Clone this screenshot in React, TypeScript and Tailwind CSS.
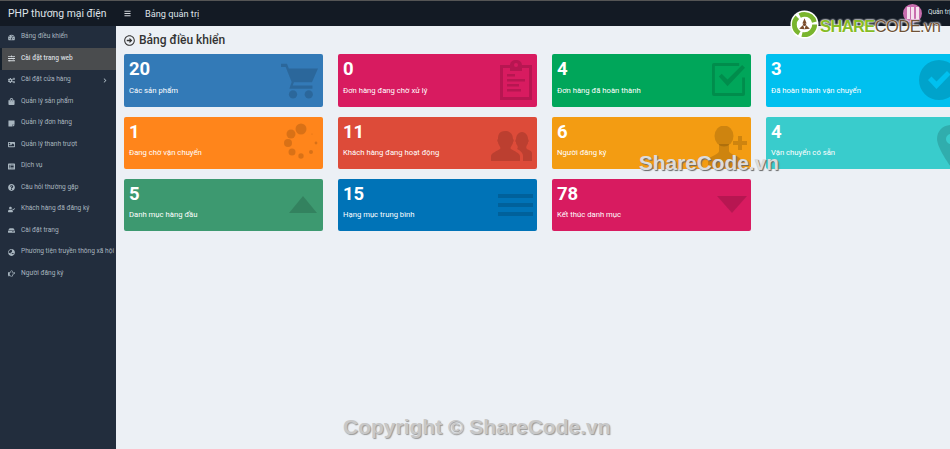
import React from "react";
import {
  FaTachometerAlt, FaSlidersH, FaCogs, FaShoppingBag, FaRegHandPointRight, FaChevronRight, FaBars, FaRegArrowAltCircleRight, FaStickyNote, FaImage, FaListAlt, FaHdd, FaQuestionCircle, FaUserCheck, FaGlobeAsia,
} from "react-icons/fa";

const Cart = () => (
  <svg viewBox="0 0 40 40" className="w-[37px] h-[37px]" fill="currentColor">
    <path d="M0 2h6.5l2 5H40l-6.5 15H14l-1.3 3.5H34V29H9l2.5-7.5L5 5.5H0z" />
    <circle cx="13" cy="35" r="4.5" />
    <circle cx="30" cy="35" r="4.5" />
  </svg>
);
const Clip = () => (
  <svg viewBox="0 0 32 40" className="w-[32px] h-[40px]" fill="currentColor" fillRule="evenodd">
    <path d="M0 5h10c0-3 2.5-5 6-5s6 2 6 5h10v35H0zM3 8v29h26V8h-7v3H10V8zM14 5a2 2 0 1 0 4 0 2 2 0 0 0-4 0z" />
    <path d="M7 14h8v2.5H7zM7 19h18v2.5H7zM7 24h12v2.5H7zM7 29h14v2.5H7z" />
  </svg>
);
const CheckSquare = () => (
  <svg viewBox="0 0 36 36" className="w-[35px] h-[35px]" fill="currentColor">
    <path d="M3 1h26v3H4v28h28V16h3v17a2 2 0 0 1-2 2H3a2 2 0 0 1-2-2V3a2 2 0 0 1 2-2z" />
    <path d="M8 15l3-3 6 6L32 3l3 3-18 19z" />
  </svg>
);
const CircleCheck = () => (
  <svg viewBox="0 0 40 40" className="w-[40px] h-[40px]" fill="currentColor" fillRule="evenodd">
    <path d="M20 0a20 20 0 1 1 0 40 20 20 0 0 1 0-40zM9 20l3.5-3.5 5 5L28 11l3.5 3.5-14 14.5z" />
  </svg>
);
const Dots = () => (
  <svg viewBox="0 0 36 36" className="w-[36px] h-[36px]" fill="currentColor">
    <circle cx="18" cy="6" r="5.5" />
    <circle cx="8" cy="11" r="4.5" />
    <circle cx="5" cy="20" r="4" />
    <circle cx="9" cy="29" r="3.5" />
    <circle cx="18" cy="33" r="2.7" />
    <circle cx="28" cy="29" r="2" />
    <circle cx="33" cy="20" r="1.4" />
    <circle cx="29" cy="11" r="0.6" />
  </svg>
);
const People = () => (
  <svg viewBox="0 0 41 36" className="w-[41px] h-[36px]" fill="currentColor">
    <path d="M0 36v-5c0-3 6-5 9-7 1-1 0-2-1-4-1-1-1-3-1-3-1 0-1-3 0-3 0-4 1-8 7-8s8 4 8 8c1 0 1 3 0 3 0 0 0 2-1 3-1 2-2 3-1 4 3 2 9 4 9 7v5z" />
    <path d="M32 36v-5c0-3-2-5-6-7 1-1 1-2 0-4-1-1-1-2-1-3-1 0-1-2 0-3 0-3 2-7 6-7s6 4 6 7c1 1 1 3 0 3 0 1 0 2-1 3-1 2-1 3 0 4 2 1 5 2 5 4v8z" />
  </svg>
);
const PersonAdd = () => (
  <svg viewBox="0 0 39 42" className="w-[39px] h-[42px]" fill="currentColor">
    <ellipse cx="16" cy="10" rx="9.5" ry="10.5" />
    <path d="M11 18h10v7c0 2 5 4 9 6 2 1 3 2 3 4v7H0v-7c0-2 1-3 3-4 4-2 8-4 8-6z" />
    <path d="M30 10h4v5h5v4h-5v5h-4v-5h-5v-4h5z" />
  </svg>
);
const Pin = () => (
  <svg viewBox="0 0 28 42" className="w-[28px] h-[42px]" fill="currentColor" fillRule="evenodd">
    <path d="M14 0c8 0 14 6 14 14 0 9-14 28-14 28S0 23 0 14C0 6 6 0 14 0zm0 9a5 5 0 1 0 0 10 5 5 0 0 0 0-10z" />
  </svg>
);
const Up = () => (
  <svg viewBox="0 0 28 17" className="w-[28px] h-[17px]" fill="currentColor">
    <path d="M14 0l14 17H0z" />
  </svg>
);
const Lines = () => (
  <svg viewBox="0 0 35 22" className="w-[35px] h-[22px]" fill="currentColor">
    <path d="M0 0h35v4H0zM0 9h35v4H0zM0 18h35v4H0z" />
  </svg>
);
const Down = () => (
  <svg viewBox="0 0 30 17" className="w-[30px] h-[17px]" fill="currentColor">
    <path d="M0 0h30L15 17z" />
  </svg>
);

const menu: [React.ComponentType<{ className?: string }>, string][] = [
  [FaTachometerAlt, "Bảng điều khiển"],
  [FaSlidersH, "Cài đặt trang web"],
  [FaCogs, "Cài đặt cửa hàng"],
  [FaShoppingBag, "Quản lý sản phẩm"],
  [FaStickyNote, "Quản lý đơn hàng"],
  [FaImage, "Quản lý thanh trượt"],
  [FaListAlt, "Dịch vụ"],
  [FaQuestionCircle, "Câu hỏi thường gặp"],
  [FaUserCheck, "Khách hàng đã đăng ký"],
  [FaHdd, "Cài đặt trang"],
  [FaGlobeAsia, "Phương tiện truyền thông xã hội"],
  [FaRegHandPointRight, "Người đăng ký"],
];

const cards: { n: string; t: string; bg: string; icon: React.ReactNode; pos: string }[] = [
  { n: "20", t: "Các sản phẩm", bg: "bg-[#337ab7]", icon: <Cart />, pos: "right-[5px] top-[8px]" },
  { n: "0", t: "Đơn hàng đang chờ xử lý", bg: "bg-[#d81b60]", icon: <Clip />, pos: "right-[5px] top-[6px]" },
  { n: "4", t: "Đơn hàng đã hoàn thành", bg: "bg-[#00a65a]", icon: <CheckSquare />, pos: "right-[5px] top-[8px]" },
  { n: "3", t: "Đã hoàn thành vận chuyển", bg: "bg-[#00c0ef]", icon: <CircleCheck />, pos: "right-[6px] top-[6px]" },
  { n: "1", t: "Đang chờ vận chuyển", bg: "bg-[#ff851b]", icon: <Dots />, pos: "right-[4px] top-[6px]" },
  { n: "11", t: "Khách hàng đang hoạt động", bg: "bg-[#dd4b39]", icon: <People />, pos: "right-[5px] top-[8px]" },
  { n: "6", t: "Người đăng ký", bg: "bg-[#f39c12]", icon: <PersonAdd />, pos: "right-[4px] top-[9px]" },
  { n: "4", t: "Vận chuyển có sẵn", bg: "bg-[#39cccc]", icon: <Pin />, pos: "right-[0px] top-[8px]" },
  { n: "5", t: "Danh mục hàng đầu", bg: "bg-[#3d9970]", icon: <Up />, pos: "right-[6px] top-[17px]" },
  { n: "15", t: "Hạng mục trung bình", bg: "bg-[#0073b7]", icon: <Lines />, pos: "right-[4px] top-[15px]" },
  { n: "78", t: "Kết thúc danh mục", bg: "bg-[#d81b60]", icon: <Down />, pos: "right-[4px] top-[17px]" },
];

export default function App() {
  return (
    <div className="relative w-[950px] h-[449px] overflow-hidden bg-[#ecf0f5] font-['Roboto',sans-serif]">
      <header className="flex h-[26px] items-center bg-[#131a24] border-t border-[#555] text-[#dfe3e8]">
        <div className="w-[116px] pl-[8px] text-[10.4px] whitespace-nowrap">PHP thương mại điện</div>
        <FaBars className="ml-[8px] w-[7px] h-[7px] text-[#d5d9de]" />
        <div className="ml-[14px] text-[9.2px]">Bảng quản trị</div>
        <div className="ml-auto flex items-center gap-[6px] mb-[1px]">
          <div className="w-[19px] h-[19px] rounded-full bg-[#c86dae] flex items-center justify-center gap-[1.5px]">
            <span className="w-[3px] h-[12px] bg-[#f5e0ee]" />
            <span className="w-[3px] h-[12px] bg-[#f5e0ee]" />
            <span className="w-[3px] h-[12px] bg-[#f5e0ee]" />
          </div>
          <span className="text-[6.5px] text-[#dfe3e8] whitespace-nowrap w-[22px] overflow-hidden">Quản trị</span>
        </div>
      </header>
      <div className="flex h-[423px]">
        <aside className="w-[116px] shrink-0 bg-[#222d3d] pt-[0.6px] text-[#a8b5bf]">
          {menu.map(([Icon, label], i) => (
            <div
              key={label}
              className={`flex items-center h-[21.5px] text-[6.6px] whitespace-nowrap ${
                i === 1 ? "bg-[#4a4c4e] border-l-[2px] border-[#15202c] pl-[6px] text-[#d5dade] font-medium" : "pl-[8px]"
              }`}
            >
              <Icon className="w-[7px] h-[7px] mr-[6px] shrink-0" />
              <span>{label}</span>
              {i === 2 && <FaChevronRight className="ml-auto mr-[9px] w-[4px] h-[5px]" />}
            </div>
          ))}
        </aside>
        <main className="flex-1 pl-[8px] pt-[6.2px] min-w-0">
          <h1 className="flex items-center h-[16px] text-[12px] font-medium text-[#333] mb-[6px] whitespace-nowrap">
            <FaRegArrowAltCircleRight className="w-[11px] h-[11px] mr-[4px]" />
            Bảng điều khiển
          </h1>
          <div className="grid grid-cols-[repeat(4,199px)] gap-x-[15px] gap-y-[10px]">
            {cards.map((c, i) => (
              <div key={i} className={`relative h-[52.4px] overflow-hidden rounded-[2px] text-white ${c.bg}`}>
                <div className="absolute left-[5px] top-[4px] text-[18.5px] leading-[22px] font-bold">{c.n}</div>
                <div className="absolute left-[5px] top-[30.5px] text-[7.7px] leading-[12px] whitespace-nowrap">{c.t}</div>
                <div className={`absolute ${c.pos} text-[#000]/15`}>{c.icon}</div>
              </div>
            ))}
          </div>
        </main>
      </div>

      <div className="absolute left-[790px] top-[10px] flex items-center">
        <svg viewBox="0 0 30 30" className="w-[29px] h-[29px]">
          <circle cx="15" cy="15" r="14.5" fill="#fff" />
          <circle cx="15" cy="15" r="10.5" fill="none" stroke="#7ab52e" strokeWidth="5" strokeDasharray="19 3" />
          <circle cx="15" cy="15" r="1.6" fill="#7a4b2a" />
          <path d="M15 8.5l2.2 5.5-4.4 0zM9.5 19.5l4-4 1.5 4.5zM20.5 19.5l-4-4-1.5 4.5z" fill="#7a4b2a" />
        </svg>
        <span className="ml-[1px] mt-[2px] text-[16.5px] leading-[22px] font-bold tracking-[-0.6px] font-['Liberation_Sans',sans-serif] text-[#86bc25] whitespace-nowrap [text-shadow:0_0_2px_#fff,0_0_2px_#fff,0_0_2px_#fff]">
          SHARE<span className="font-normal text-[#6f5236]">CODE.vn</span>
        </span>
      </div>
      <div className="absolute left-[639px] top-[151px] text-[20.8px] leading-[24px] font-bold font-['Liberation_Sans',sans-serif] text-[#dcdcdc] whitespace-nowrap [text-shadow:1px_1px_1px_#666]">
        ShareCode.vn
      </div>
      <div className="absolute left-[343px] top-[415px] text-[21px] leading-[24px] font-bold font-['Liberation_Sans',sans-serif] text-[#c8c8c8] whitespace-nowrap [text-shadow:1px_1px_1px_#999]">
        Copyright © ShareCode.vn
      </div>
    </div>
  );
}
